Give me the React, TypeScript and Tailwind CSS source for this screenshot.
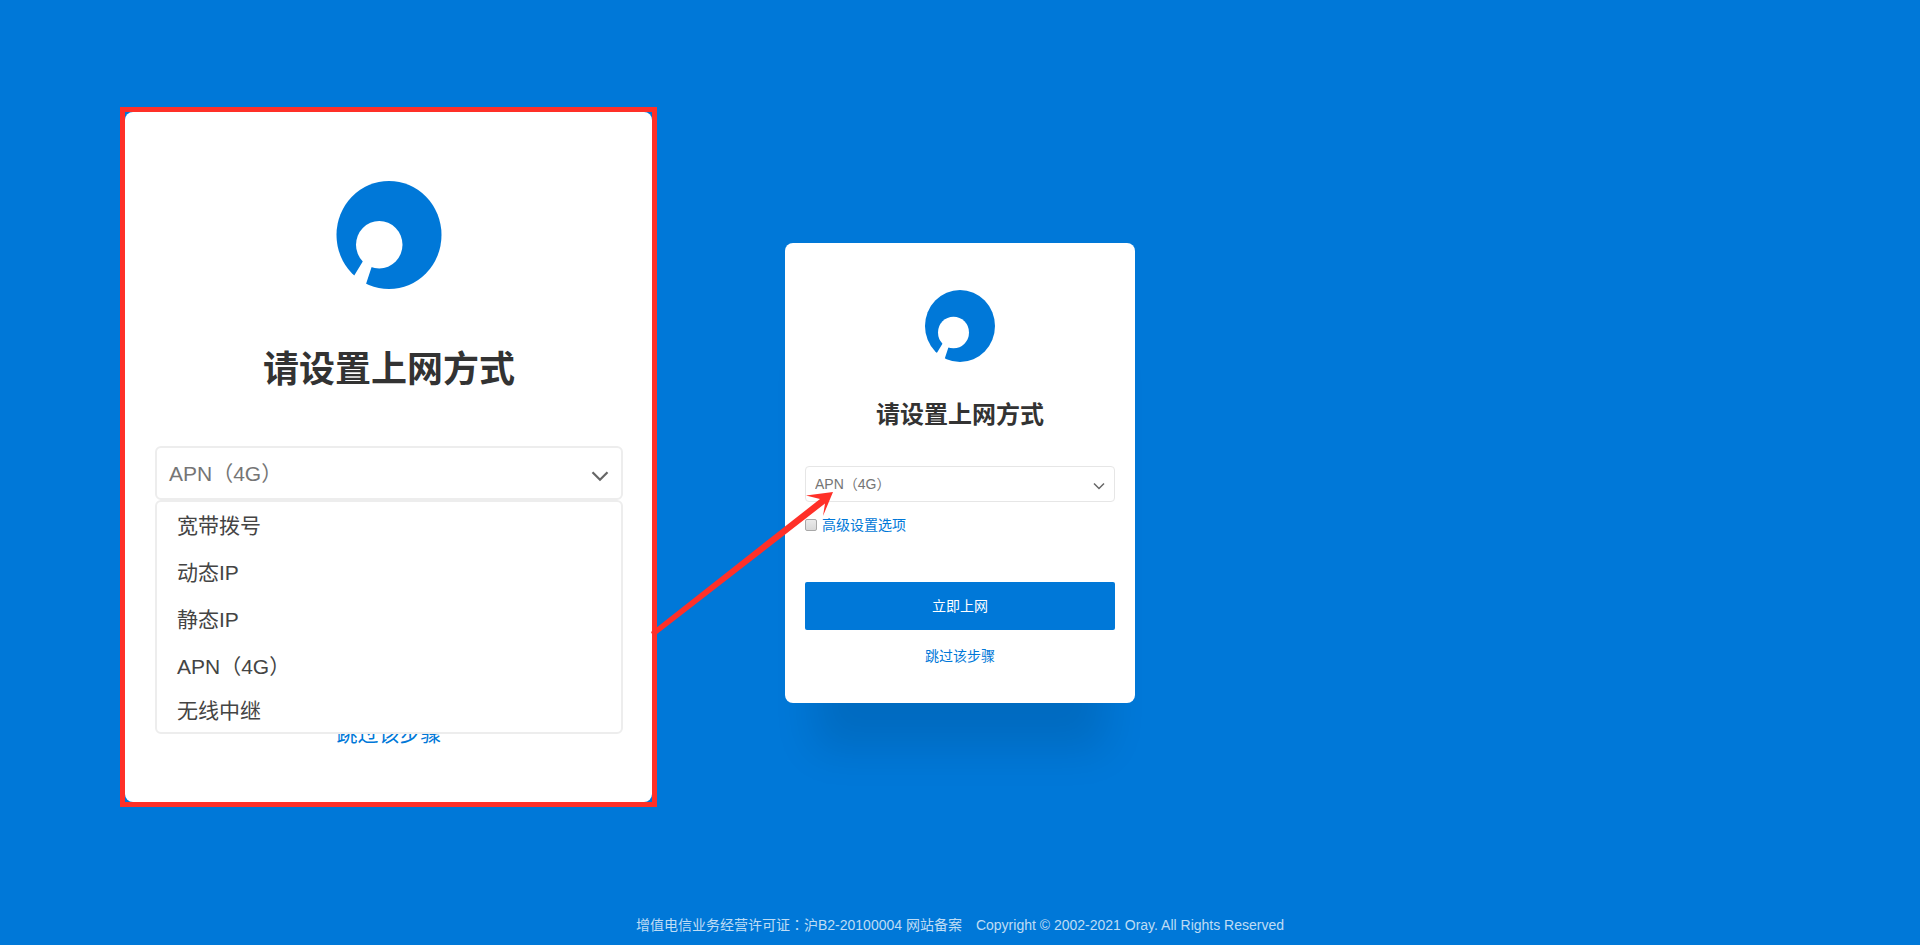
import { useState } from 'react'
import type { ReactNode } from 'react'
import clsx from 'clsx'

const MODES = ['宽带拨号', '动态IP', '静态IP', 'APN（4G）', '无线中继']

function Logo({ className }: { className?: string }) {
  return (
    <svg viewBox="0 0 70 72" className={className} role="img" aria-hidden="true">
      <ellipse cx="35" cy="36" rx="35" ry="36" fill="#0078d8" />
      <ellipse cx="28.5" cy="42.5" rx="15.5" ry="15.8" fill="#fff" />
      <path d="M18.5 52 L17.3 54 L10 66 L17 76 L20 67.7 L23.3 57.7 L25 55 Z" fill="#fff" />
    </svg>
  )
}

function Chevron({ className }: { className?: string }) {
  return (
    <svg
      viewBox="0 0 12 8"
      className={clsx('pointer-events-none', className)}
      fill="none"
      stroke="#666"
      strokeWidth="1.5"
      aria-hidden="true"
    >
      <path d="M1 1.5 L6 6.5 L11 1.5" />
    </svg>
  )
}

function Arrow() {
  return (
    <svg
      viewBox="0 0 184 146"
      className="pointer-events-none absolute -left-[135px] top-[247px] h-[146px] w-[184px]"
      aria-hidden="true"
    >
      <path
        d="M183 2 L156 5.5 L170 9 L6 138 L1 142 L2 144 L7 144 L175 13.5 L173 26 Z"
        fill="#ff3028"
      />
    </svg>
  )
}

function Card({ children }: { children: ReactNode }) {
  return (
    <section className="relative flex w-[350px] flex-col items-center rounded-lg bg-white px-5 pt-[47px] pb-[37px] shadow-[0_76px_40px_-30px_rgba(0,0,0,0.11)]">
      {children}
    </section>
  )
}

function SetupCard() {
  const [mode, setMode] = useState('APN（4G）')

  return (
    <Card>
      <Logo className="h-[72px] w-[70px]" />
      <h1 className="mt-[37px] text-2xl font-bold text-[#333]">请设置上网方式</h1>
      <div className="relative mt-[35px] w-full">
        <select
          aria-label="请设置上网方式"
          value={mode}
          onChange={(e) => setMode(e.target.value)}
          className="h-9 w-full appearance-none rounded border border-[#e6e6e6] bg-white pl-[9px] text-sm text-[#757575]"
        >
          {MODES.map((m) => (
            <option key={m}>{m}</option>
          ))}
        </select>
        <Chevron className="absolute top-4 right-2.5 h-2 w-3" />
      </div>
      <label className="mt-[11px] flex h-6 w-full items-center gap-[5px] text-sm text-[#0078d8]">
        <input
          type="checkbox"
          className="size-3 appearance-none rounded-xs border border-[#a8a8a8] bg-linear-to-b from-[#eaeaea] to-[#d8d8d8]"
        />
        高级设置选项
      </label>
      <button
        type="button"
        className="mt-[45px] h-12 w-full rounded-xs bg-[#0078d8] text-sm text-white"
      >
        立即上网
      </button>
      <a href="#skip" className="mt-4 text-sm text-[#0078d8]">
        跳过该步骤
      </a>
      <Arrow />
    </Card>
  )
}

function ZoomedPanel() {
  return (
    <div className="w-[537px] border-[5px] border-[#ff3028]">
      <section className="flex flex-col items-center rounded-lg bg-white pt-[69px] pr-[29px] pb-[52px] pl-[30px]">
        <Logo className="h-[108px] w-[106px]" />
        <h2 className="mt-[54px] text-4xl leading-[54px] font-bold text-[#333]">
          请设置上网方式
        </h2>
        <div className="relative mt-[49px] w-full text-[21px]">
          <button
            type="button"
            aria-haspopup="listbox"
            aria-expanded="true"
            className="flex h-[54px] w-full items-center justify-between rounded-md border-2 border-[#ededed] pt-0.5 pr-3 pl-3 text-[#757575]"
          >
            APN（4G）
            <Chevron className="mt-1 h-3 w-[18px]" />
          </button>
          <ul
            role="listbox"
            aria-label="请设置上网方式"
            className="absolute inset-x-0 top-full z-10 rounded-md border-2 border-[#ededed] bg-white pt-px pl-5 text-[#444]"
          >
            {MODES.map((m) => (
              <li
                key={m}
                role="option"
                aria-selected={m === 'APN（4G）'}
                className="flex h-[47px] items-center last:h-[41px]"
              >
                {m}
              </li>
            ))}
          </ul>
        </div>
        <a href="#skip" className="mt-[218px] text-[21px] leading-8 text-[#0078d8]">
          跳过该步骤
        </a>
      </section>
    </div>
  )
}

export default function App() {
  return (
    <div className="flex min-h-screen flex-col bg-[#0078d8] font-['Liberation_Sans','Noto_Sans_CJK_SC',sans-serif]">
      <main className="grid flex-1 grid-cols-[1fr_auto_1fr] items-center pt-10">
        <div className="flex justify-end pr-32 pb-8">
          <ZoomedPanel />
        </div>
        <SetupCard />
      </main>
      <footer className="flex h-10 items-center justify-center gap-3.5 font-['Liberation_Sans','Noto_Sans_CJK_TC',sans-serif] text-sm text-white/75">
        <span>
          增值电信业务经营许可证：沪B2-20100004{' '}
          <a href="#record">网站备案</a>
        </span>
        <span>Copyright © 2002-2021 Oray. All Rights Reserved</span>
      </footer>
    </div>
  )
}
